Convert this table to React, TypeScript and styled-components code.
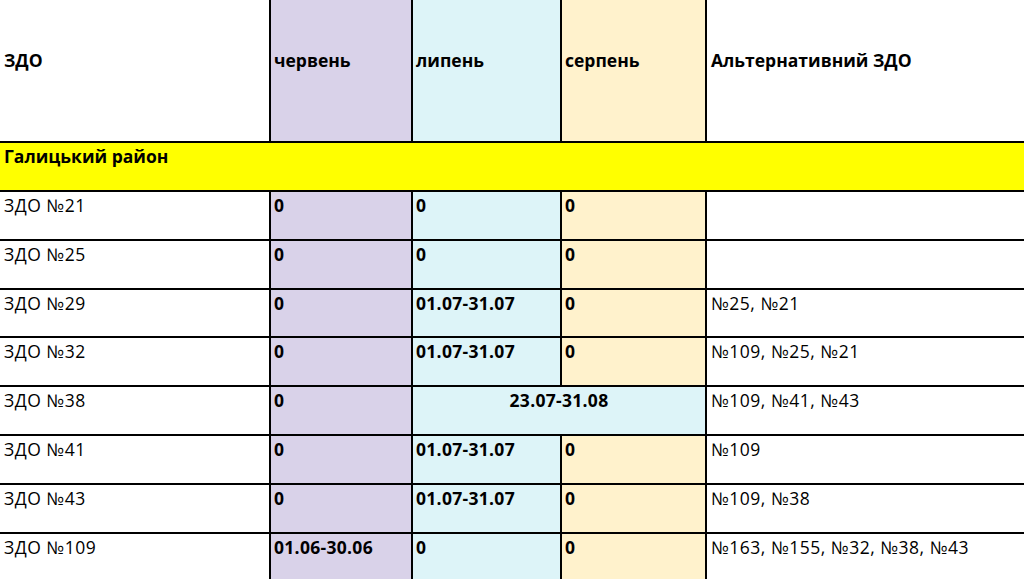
import styled, { createGlobalStyle } from "styled-components";

const GlobalStyle = createGlobalStyle`
    html, body {
        margin: 0;
        padding: 0;
        background: #fff;
    }
    body {
        font-family: "Open Sans", "Noto Sans", sans-serif;
        color: #000;
        overflow: hidden;
    }
`;

const Sheet = styled.div`
    display: grid;
    grid-template-columns: 271px 142px 149px 145px 1fr;
    grid-template-rows: 143px 49px;
    grid-auto-rows: 48.8px;
    width: 1024px;
`;

type Tone = "white" | "june" | "july" | "august" | "district";

const tones: Record<Tone, string> = {
    white: "#ffffff",
    june: "#d9d2e9",
    july: "#ddf4f8",
    august: "#fff2cc",
    district: "#ffff00",
};

const Cell = styled.div<{ $tone?: Tone; $bold?: boolean; $span?: number; $center?: boolean }>`
    box-sizing: border-box;
    background: ${(p) => tones[p.$tone || "white"]};
    border-right: 2px solid #000;
    border-bottom: 2px solid #000;
    padding: 2px 3px 0 3px;
    font-size: 17.5px;
    line-height: 22px;
    letter-spacing: ${(p) => (p.$bold ? "0.3px" : "0.5px")};
    font-weight: ${(p) => (p.$bold ? 700 : 400)};
    text-align: ${(p) => (p.$center ? "center" : "left")};
    white-space: nowrap;
    overflow: hidden;
    grid-column: span ${(p) => p.$span || 1};
`;

const HeadCell = styled(Cell)`
    padding-top: 49px;
    font-weight: 700;
    letter-spacing: 0;
`;

const FirstCell = styled(Cell)`
    padding-left: 4px;
`;

const DistrictCell = styled(Cell)`
    grid-column: 1 / -1;
    border-right: none;
    padding-top: 2px;
    padding-left: 4px;
    font-weight: 700;
    letter-spacing: 0;
`;

const LastCell = styled(Cell)`
    border-right: none;
    padding-left: 4px;
`;

type Row = {
    name: string;
    june: string;
    july: string;
    august?: string;
    alt: string;
};

const rows: Row[] = [
    { name: "ЗДО №21", june: "0", july: "0", august: "0", alt: "" },
    { name: "ЗДО №25", june: "0", july: "0", august: "0", alt: "" },
    { name: "ЗДО №29", june: "0", july: "01.07-31.07", august: "0", alt: "№25, №21" },
    { name: "ЗДО №32", june: "0", july: "01.07-31.07", august: "0", alt: "№109, №25, №21" },
    { name: "ЗДО №38", june: "0", july: "23.07-31.08", alt: "№109, №41, №43" },
    { name: "ЗДО №41", june: "0", july: "01.07-31.07", august: "0", alt: "№109" },
    { name: "ЗДО №43", june: "0", july: "01.07-31.07", august: "0", alt: "№109, №38" },
    { name: "ЗДО №109", june: "01.06-30.06", july: "0", august: "0", alt: "№163, №155, №32, №38, №43" },
];

export default function App() {
    return (
        <>
            <GlobalStyle />
            <Sheet>
                <HeadCell style={{ paddingLeft: 4 }}>ЗДО</HeadCell>
                <HeadCell $tone="june">червень</HeadCell>
                <HeadCell $tone="july">липень</HeadCell>
                <HeadCell $tone="august">серпень</HeadCell>
                <HeadCell style={{ borderRight: "none", paddingLeft: 4 }}>Альтернативний ЗДО</HeadCell>

                <DistrictCell $tone="district">Галицький район</DistrictCell>

                {rows.map((r) => (
                    <>
                        <FirstCell key={r.name + "n"}>{r.name}</FirstCell>
                        <Cell $tone="june" $bold>{r.june}</Cell>
                        {r.august === undefined ? (
                            <Cell $tone="july" $bold $span={2} $center>{r.july}</Cell>
                        ) : (
                            <>
                                <Cell $tone="july" $bold>{r.july}</Cell>
                                <Cell $tone="august" $bold>{r.august}</Cell>
                            </>
                        )}
                        <LastCell>{r.alt}</LastCell>
                    </>
                ))}
            </Sheet>
        </>
    );
}
